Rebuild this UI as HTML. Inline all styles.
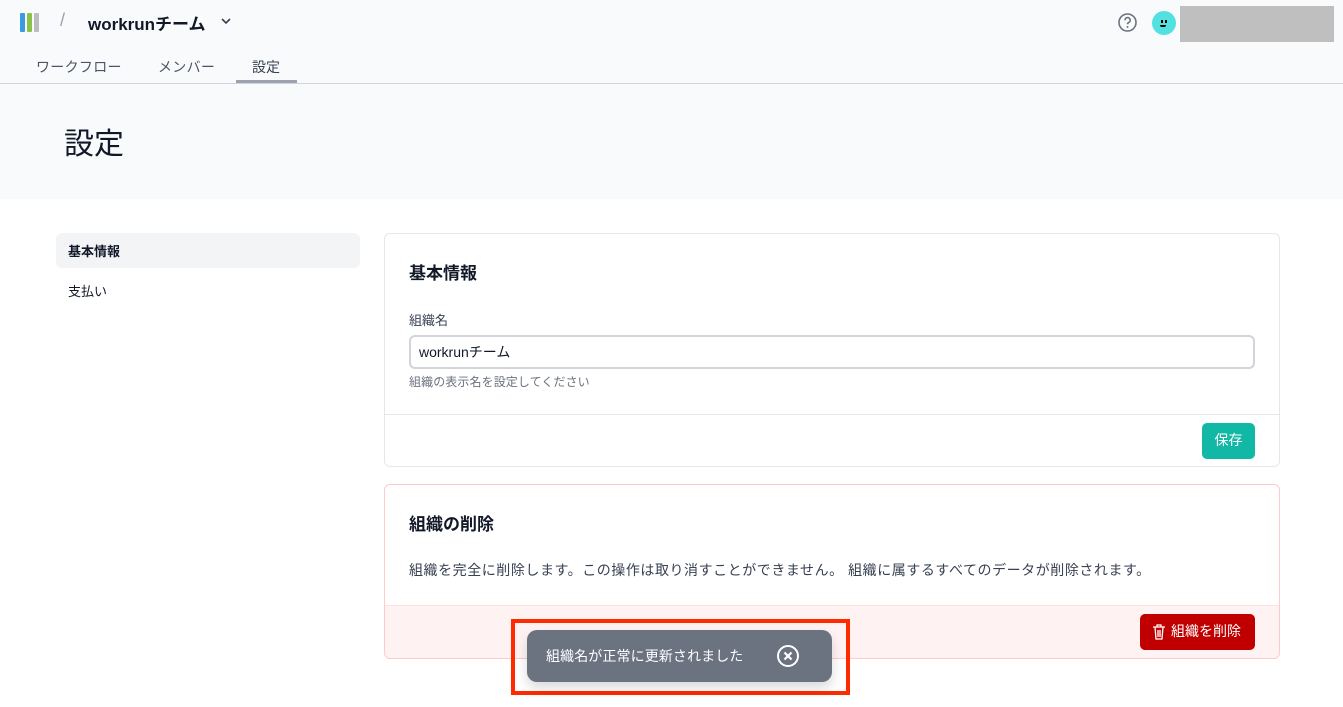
<!DOCTYPE html>
<html><head><meta charset="utf-8"><style>
*{box-sizing:border-box;margin:0;padding:0}
body{width:1343px;height:707px;overflow:hidden;background:#fff;font-family:"Liberation Sans","Noto Sans CJK JP",sans-serif;color:#1f2937;position:relative}
.abs{position:absolute}
</style></head><body>
<div class="abs" style="left:0;top:0;width:1343px;height:199px;background:#f9fafb"></div>
<div class="abs" style="left:0;top:83px;width:1343px;height:1px;background:#d1d5db"></div>
<div class="abs" style="left:20px;top:13px;width:5px;height:19px;background:#3b9ae1;border-radius:1px"></div>
<div class="abs" style="left:27px;top:13px;width:5px;height:19px;background:#8bc34a;border-radius:1px"></div>
<div class="abs" style="left:34px;top:13px;width:5px;height:19px;background:#bdbdbd;border-radius:1px"></div>
<div class="abs" style="left:60px;top:10px;font-size:18px;color:#9ca3af">/</div>
<div class="abs" style="left:88px;top:10px;font-size:17px;font-weight:bold;color:#111827">workrunチーム</div>
<svg class="abs" style="left:220px;top:16px" width="12" height="10" viewBox="0 0 12 10"><path d="M2 3l4 4 4-4" stroke="#374151" stroke-width="1.6" fill="none"/></svg>
<div class="abs" style="left:36px;top:57px;font-size:14px;color:#4b5563;letter-spacing:.3px">ワークフロー</div>
<div class="abs" style="left:158px;top:57px;font-size:14px;color:#4b5563;letter-spacing:.3px">メンバー</div>
<div class="abs" style="left:252px;top:57px;font-size:14px;color:#374151">設定</div>
<div class="abs" style="left:236px;top:80px;width:61px;height:3px;background:#9ca3af"></div>
<svg class="abs" style="left:1117px;top:12px" width="21" height="21" viewBox="0 0 21 21"><circle cx="10.5" cy="10.5" r="8.5" stroke="#6b7280" stroke-width="1.6" fill="none"/><path d="M8 8.3a2.6 2.6 0 1 1 3.6 2.3c-.8.4-1.1.9-1.1 1.7" stroke="#6b7280" stroke-width="1.6" fill="none"/><circle cx="10.5" cy="15" r="1" fill="#6b7280"/></svg>
<div class="abs" style="left:1152px;top:11px;width:24px;height:24px;border-radius:50%;background:#53e0e0"></div>
<div class="abs" style="left:1161px;top:20px;width:2px;height:3px;background:#000"></div><div class="abs" style="left:1165px;top:20px;width:2px;height:3px;background:#000"></div>
<div class="abs" style="left:1160px;top:25px;width:6px;height:2px;background:#000;border-radius:0 0 3px 3px"></div>
<div class="abs" style="left:1180px;top:6px;width:154px;height:36px;background:#bfbfbf"></div>
<div class="abs" style="left:64px;top:119px;font-size:30px;color:#111827">設定</div>
<div class="abs" style="left:56px;top:233px;width:304px;height:35px;background:#f3f4f6;border-radius:6px"></div>
<div class="abs" style="left:68px;top:241px;font-size:13px;font-weight:bold;color:#111827">基本情報</div>
<div class="abs" style="left:68px;top:281px;font-size:13px;color:#111827">支払い</div>
<div class="abs" style="left:384px;top:233px;width:896px;height:234px;border:1px solid #e5e7eb;border-radius:6px"></div>
<div class="abs" style="left:409px;top:259px;font-size:17px;font-weight:bold;color:#111827">基本情報</div>
<div class="abs" style="left:409px;top:310px;font-size:13px;color:#374151">組織名</div>
<div class="abs" style="left:409px;top:335px;width:846px;height:34px;border:2px solid #d1d5db;border-radius:6px;padding:5px 8px;font-size:14px;color:#111827">workrunチーム</div>
<div class="abs" style="left:409px;top:373px;font-size:12px;color:#6b7280;letter-spacing:.1px">組織の表示名を設定してください</div>
<div class="abs" style="left:385px;top:414px;width:894px;height:1px;background:#e5e7eb"></div>
<div class="abs" style="left:1202px;top:423px;width:53px;height:36px;background:#12b8a6;border-radius:5px;color:#fff;font-size:14px;text-align:center;line-height:35px">保存</div>
<div class="abs" style="left:384px;top:484px;width:896px;height:175px;border:1px solid #fecaca;border-radius:6px;overflow:hidden"><div style="position:absolute;left:0;top:120px;width:100%;height:55px;background:#fef2f2;border-top:1px solid #fde2e2"></div></div>
<div class="abs" style="left:409px;top:510px;font-size:17px;font-weight:bold;color:#111827">組織の削除</div>
<div class="abs" style="left:409px;top:560px;font-size:14px;color:#374151;letter-spacing:.55px">組織を完全に削除します。この操作は取り消すことができません。 組織に属するすべてのデータが削除されます。</div>
<div class="abs" style="left:1140px;top:614px;width:115px;height:36px;background:#c00000;border-radius:5px;color:#fff;font-size:14px;line-height:35px;padding-left:31px">組織を削除</div>
<svg class="abs" style="left:1152px;top:623px" width="14" height="18" viewBox="0 0 14 18"><path d="M1 4h12M5 4V2h4v2M3 4l1 12h6l1-12M6 7v7M8 7v7" stroke="#fff" stroke-width="1.3" fill="none"/></svg>
<div class="abs" style="left:511px;top:619px;width:339px;height:76px;border:4px solid #ff2a00"></div>
<div class="abs" style="left:527px;top:630px;width:305px;height:52px;background:#6b7280;border-radius:10px;box-shadow:0 6px 12px rgba(0,0,0,.15)"></div>
<div class="abs" style="left:546px;top:646px;font-size:14px;color:#fff;letter-spacing:.1px">組織名が正常に更新されました</div>
<svg class="abs" style="left:776px;top:644px" width="24" height="24" viewBox="0 0 24 24"><circle cx="12" cy="12" r="10" stroke="#fff" stroke-width="2" fill="none"/><path d="M8.5 8.5l7 7M15.5 8.5l-7 7" stroke="#fff" stroke-width="2.2"/></svg>
</body></html>
